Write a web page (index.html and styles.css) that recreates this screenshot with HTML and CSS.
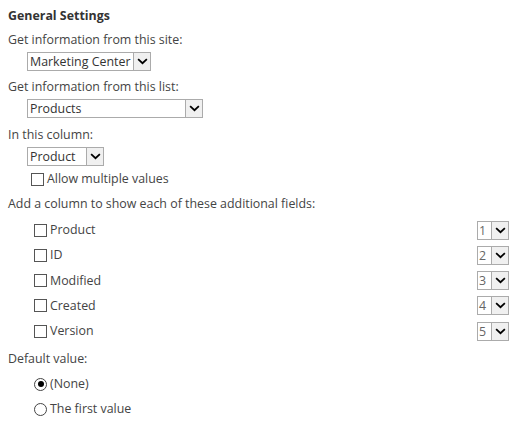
FILE: index.html
```html
<!DOCTYPE html>
<html>
<head>
<meta charset="utf-8">
<link rel="stylesheet" href="styles.css">
</head>
<body>
<div class="form">
  <div class="title">General Settings</div>

  <div class="label l-site">Get information from this site:</div>
  <div class="indent">
    <div class="select s-site"><span class="val">Marketing Center</span><span class="btn"><svg viewBox="0 0 12 8" width="11" height="7"><path d="M1 1.2 L6 6 L11 1.2" fill="none" stroke="#000" stroke-width="2"/></svg></span></div>
  </div>

  <div class="label l-list">Get information from this list:</div>
  <div class="indent">
    <div class="select s-list"><span class="val">Products</span><span class="btn"><svg viewBox="0 0 12 8" width="11" height="7"><path d="M1 1.2 L6 6 L11 1.2" fill="none" stroke="#000" stroke-width="2"/></svg></span></div>
  </div>

  <div class="label l-col">In this column:</div>
  <div class="indent">
    <div class="select s-col"><span class="val">Product</span><span class="btn"><svg viewBox="0 0 12 8" width="11" height="7"><path d="M1 1.2 L6 6 L11 1.2" fill="none" stroke="#000" stroke-width="2"/></svg></span></div>
    <div class="check-row multi"><span class="box"></span><span>Allow multiple values</span></div>
  </div>

  <div class="label l-add">Add a column to show each of these additional fields:</div>
  <div class="fields">
    <div class="field"><div class="check-row"><span class="box"></span><span>Product</span></div><div class="select num"><span class="val">1</span><span class="btn"><svg viewBox="0 0 12 8" width="11" height="7"><path d="M1 1.2 L6 6 L11 1.2" fill="none" stroke="#000" stroke-width="2"/></svg></span></div></div>
    <div class="field"><div class="check-row"><span class="box"></span><span>ID</span></div><div class="select num"><span class="val">2</span><span class="btn"><svg viewBox="0 0 12 8" width="11" height="7"><path d="M1 1.2 L6 6 L11 1.2" fill="none" stroke="#000" stroke-width="2"/></svg></span></div></div>
    <div class="field"><div class="check-row"><span class="box"></span><span>Modified</span></div><div class="select num"><span class="val">3</span><span class="btn"><svg viewBox="0 0 12 8" width="11" height="7"><path d="M1 1.2 L6 6 L11 1.2" fill="none" stroke="#000" stroke-width="2"/></svg></span></div></div>
    <div class="field"><div class="check-row"><span class="box"></span><span>Created</span></div><div class="select num"><span class="val">4</span><span class="btn"><svg viewBox="0 0 12 8" width="11" height="7"><path d="M1 1.2 L6 6 L11 1.2" fill="none" stroke="#000" stroke-width="2"/></svg></span></div></div>
    <div class="field"><div class="check-row"><span class="box"></span><span>Version</span></div><div class="select num"><span class="val">5</span><span class="btn"><svg viewBox="0 0 12 8" width="11" height="7"><path d="M1 1.2 L6 6 L11 1.2" fill="none" stroke="#000" stroke-width="2"/></svg></span></div></div>
  </div>

  <div class="label l-def">Default value:</div>
  <div class="radios">
    <div class="radio-row"><span class="radio on"></span><span>(None)</span></div>
    <div class="radio-row"><span class="radio"></span><span>The first value</span></div>
  </div>
</div>
</body>
</html>
```

FILE: styles.css
```css
html, body {
  margin: 0;
  padding: 0;
  background: #fff;
}
body {
  font-family: "Open Sans", "Noto Sans", sans-serif;
  font-size: 12.4px;
  color: #444;
}
.form {
  padding: 7px 8px 0 8px;
  display: flex;
  flex-direction: column;
}
.title {
  font-weight: bold;
  color: #333;
  line-height: 18px;
  height: 18px;
}
.label {
  line-height: 18px;
  height: 18px;
}
.l-site { margin-top: 6px; }
.l-list { margin-top: 7px; }
.l-col { margin-top: 8px; }
.l-add { margin-top: 7px; }
.l-def { margin-top: 10px; }

.indent {
  padding-left: 19px;
  margin-top: 3px;
  display: flex;
  flex-direction: column;
  align-items: flex-start;
}
.select {
  display: flex;
  align-items: stretch;
  border: 1px solid #ababab;
  background: #fff;
  height: 17px;
  box-sizing: content-box;
  color: #333;
}
.select .val {
  padding: 0 2px 0 2px;
  line-height: 17px;
  flex: 1;
  white-space: nowrap;
}
.select .btn {
  width: 16px;
  background: #f0f0f0;
  border-left: 1px solid #ababab;
  display: flex;
  align-items: center;
  justify-content: center;
}
.s-site { width: 122px; }
.s-list { width: 174px; }
.s-col { width: 75px; }
.num { width: 30px; color: #666; }
.num .val { padding-left: 1px; }

.check-row {
  display: flex;
  align-items: center;
  height: 18px;
  line-height: 18px;
}
.box {
  width: 11px;
  height: 11px;
  border: 1px solid #555;
  background: #fff;
  margin-right: 3px;
  flex: none;
}
.multi {
  margin-top: 4px;
  padding-left: 4px;
}

.fields {
  margin-top: 8px;
  display: flex;
  flex-direction: column;
  gap: 7.3px;
  padding-left: 26px;
  padding-right: 9px;
}
.field {
  display: flex;
  justify-content: space-between;
  align-items: center;
  height: 18px;
}

.radios {
  margin-top: 7px;
  padding-left: 26px;
  display: flex;
  flex-direction: column;
  gap: 7px;
}
.radio-row {
  display: flex;
  align-items: center;
  height: 18px;
  line-height: 18px;
}
.radio {
  width: 11px;
  height: 11px;
  border: 1px solid #444;
  border-radius: 50%;
  margin-right: 3px;
  flex: none;
  display: flex;
  align-items: center;
  justify-content: center;
}
.radio.on::after {
  content: "";
  width: 6px;
  height: 6px;
  border-radius: 50%;
  background: #000;
}
```
